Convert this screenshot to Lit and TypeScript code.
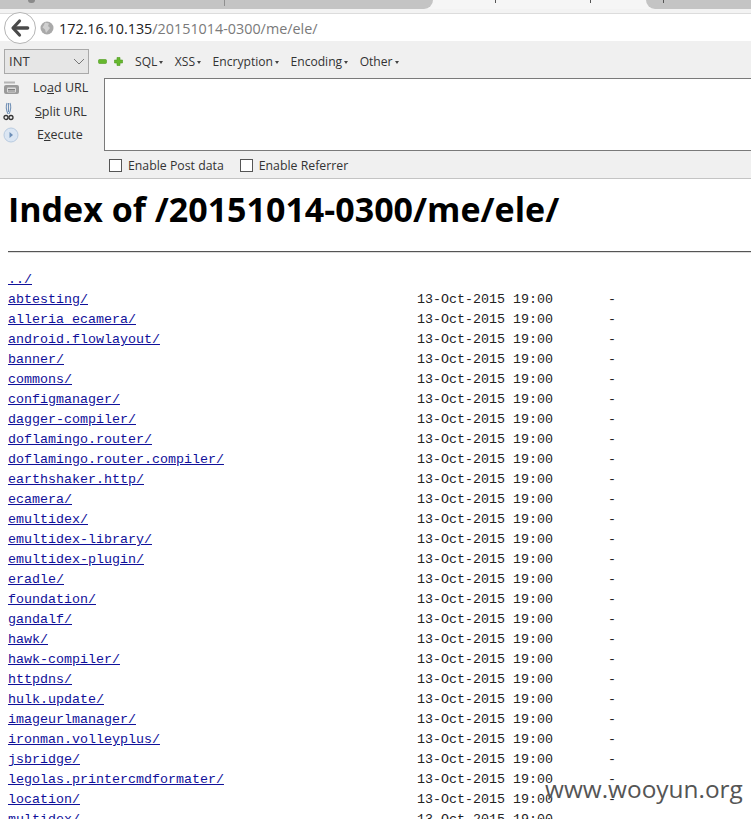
import { LitElement, html, css, svg } from "lit";
import { customElement } from "lit/decorators.js";

const names = [
  "abtesting/", "alleria_ecamera/", "android.flowlayout/", "banner/", "commons/",
  "configmanager/", "dagger-compiler/", "doflamingo.router/", "doflamingo.router.compiler/",
  "earthshaker.http/", "ecamera/", "emultidex/", "emultidex-library/", "emultidex-plugin/",
  "eradle/", "foundation/", "gandalf/", "hawk/", "hawk-compiler/", "httpdns/", "hulk.update/",
  "imageurlmanager/", "ironman.volleyplus/", "jsbridge/", "legolas.printercmdformater/",
  "location/", "multidex/",
];

const icons = {
  back: svg`<svg width="20" height="20" viewBox="0 0 20 20"><path d="M9.500 3 3 10 9.500 17" fill="none" stroke="#4a4a4a" stroke-width="3.200" stroke-linecap="round" stroke-linejoin="round"/><path d="M4 10H17.500" stroke="#4a4a4a" stroke-width="3.600" stroke-linecap="round"/></svg>`,
  globe: svg`<svg width="14" height="14" viewBox="0 0 14 14"><circle cx="7" cy="7" r="6.500" fill="#a9a9a9"/><path d="M5 1.500 9 2.500 8 5 10 7 8 9.500 6 12 5 8.500 2.500 6.500 4 4Z" fill="#d0d0d0"/></svg>`,
  minus: svg`<svg width="9" height="9" viewBox="0 0 9 9"><rect x="0.500" y="2.500" width="8" height="4" rx="1" fill="#66b82e" stroke="#4f9a1e" stroke-width=".6"/></svg>`,
  plus: svg`<svg width="9" height="9" viewBox="0 0 9 9"><path d="M3 .5H6V3H8.500V6H6V8.500H3V6H.5V3H3Z" fill="#66b82e" stroke="#4f9a1e" stroke-width=".6"/></svg>`,
  load: svg`<svg width="16" height="14" viewBox="0 0 16 14"><path d="M1 1.500H12" stroke="#b5b5b5" stroke-width="2"/><rect x="1" y="4" width="15" height="9" rx="2" fill="#9a9a9a"/><rect x="4" y="6.500" width="9" height="5" rx="1" fill="#dcdcdc"/><path d="M5 8.500H12M5 10H12" stroke="#666" stroke-width=".8"/></svg>`,
  split: svg`<svg width="11" height="19" viewBox="0 0 11 19"><path d="M4 1C2.500 5 3.500 9 5 12M7 1C8.500 5 7.500 9 6 12M5.500 1V10" fill="none" stroke="#6f8fb5" stroke-width="1.100"/><circle cx="3" cy="15.500" r="2" fill="none" stroke="#333" stroke-width="1.300"/><circle cx="8" cy="15.500" r="2" fill="none" stroke="#333" stroke-width="1.300"/></svg>`,
  run: svg`<svg width="16" height="16" viewBox="0 0 16 16"><circle cx="8" cy="8" r="7" fill="#dbe6f3" stroke="#b9cbe0"/><path d="M6.500 5 10 8 6.500 11Z" fill="#6d8fb8"/></svg>`,
  caret: svg`<svg width="12" height="7" viewBox="0 0 12 7"><path d="M1 1 6 6 11 1" fill="none" stroke="#777" stroke-width="1"/></svg>`,
};

@customElement("app-root")
export class AppRoot extends LitElement {
  static styles = css`
    :host {
      display: block;
      position: relative;
      height: 819px;
      overflow: hidden;
      background: #fff;
      font-family: "Open Sans", sans-serif;
    }
    .tabs {
      height: 9px;
      background: #f6f6f6;
      display: flex;
    }
    .tab {
      background: #c4c4c4;
      position: relative;
    }
    .tab-left {
      width: 433px;
      border-bottom-right-radius: 9px;
    }
    .tab-active {
      flex: 1;
      position: relative;
    }
    .tab-right {
      width: 105px;
      border-bottom-left-radius: 9px;
    }
    .mark {
      position: absolute;
      top: 0;
      width: 1px;
      height: 3px;
      background: #555;
    }
    .mark-tall {
      height: 6px;
      background: #8f8f8f;
    }
    .tab-star {
      position: absolute;
      left: 28px;
      top: 0;
      width: 7px;
      height: 3px;
      background: #8a8a8a;
      border-radius: 0 0 3px 3px;
    }
    .tab-gap {
      height: 5px;
      background: #f3f3f3;
      border-bottom: 1px solid #dcdcdc;
      box-sizing: border-box;
    }
    .nav {
      height: 27px;
      background: #fff;
      display: flex;
      align-items: center;
      padding-left: 40px;
      gap: 5px;
      position: relative;
      font-size: 14.350px;
      color: #222;
    }
    .addr { padding-top: 2px; }
    .back {
      position: absolute;
      left: 4px;
      top: -2px;
      width: 30px;
      height: 30px;
      border-radius: 50%;
      background: #fff;
      border: 1px solid #b5b5b5;
      display: flex;
      align-items: center;
      justify-content: center;
    }
    .path { color: #7a7a7a; }
    .hackbar {
      height: 137px;
      background: #f0f0f0;
      border-bottom: 1px solid #c4c4c4;
      font-size: 12.500px;
      color: #333;
    }
    .row1 {
      display: flex;
      align-items: center;
      height: 30px;
      padding: 5px 0 0 4px;
    }
    .select {
      box-sizing: border-box;
      width: 85px;
      height: 25px;
      border: 1px solid #a9a9a9;
      background: #e6e6e6;
      display: flex;
      align-items: center;
      justify-content: space-between;
      padding: 0 3px 0 4px;
      font-size: 13px;
    }
    .tools {
      display: flex;
      align-items: center;
      margin-left: 9px;
      font-size: 12.100px;
    }
    .tools svg { display: block; }
    .plus { margin-left: 7px; margin-right: 12px; }
    .menu { margin-right: 11.500px; white-space: nowrap; }
    .menu::after {
      content: "";
      display: inline-block;
      margin-left: 2px;
      vertical-align: 2px;
      border: 2px solid transparent;
      border-top: 3px solid #444;
      border-bottom: 0;
    }
    .row2 { display: flex; }
    .actions {
      width: 104px;
      flex: none;
      display: flex;
      flex-direction: column;
    }
    .action {
      height: 23.500px;
      display: flex;
      align-items: center;
    }
    .action svg { margin-left: 3px; }
    .ic { width: 26px; display: flex; flex: none; }
    .label-load { margin-left: 7px; }
    .label-split { margin-left: 9px; }
    .label-run { margin-left: 11px; }
    .textarea {
      flex: 1;
      height: 73px;
      margin-top: 2px;
      box-sizing: border-box;
      background: #fff;
      border: 1px solid #7a7a7a;
      border-right: 0;
    }
    .row3 {
      display: flex;
      align-items: center;
      height: 26px;
      padding: 1px 0 0 109px;
      font-size: 12.300px;
    }
    .check {
      display: flex;
      align-items: center;
      gap: 6px;
      margin-right: 16px;
    }
    .box {
      width: 11px;
      height: 11px;
      border: 1px solid #555;
      background: #fff;
    }
    h1 {
      margin: 0;
      padding: 8px 0 0 8px;
      font-size: 34px;
      line-height: 44px;
      font-weight: 700;
      color: #000;
      white-space: nowrap;
    }
    hr {
      margin: 20px 0 0 8px;
      border: 0;
      height: 1px;
      background: #555;
      box-shadow: 0 1px 0 #ddd;
    }
    .list {
      margin: 18px 0 0 8px;
      font-family: "Liberation Mono", monospace;
      font-size: 13.333px;
      line-height: 20px;
      color: #222;
      display: grid;
      grid-template-columns: 409px 191px auto;
      white-space: pre;
    }
    .list a { color: #10109a; text-decoration: underline; justify-self: start; }
    .watermark {
      position: absolute;
      left: 545px;
      top: 771px;
      font-size: 24.400px;
      line-height: 36px;
      color: #555;
      text-shadow: 0 0 1px rgba(255, 255, 255, 0.6);
      white-space: nowrap;
    }
  `;

  render() {
    return html`
      <div class="tabs">
        <div class="tab tab-left">
          <span class="tab-star"></span>
          <span class="mark mark-tall" style="left:224px"></span>
        </div>
        <div class="tab-active">
          <span class="mark" style="left:62px"></span>
          <span class="mark" style="left:157px"></span>
        </div>
        <div class="tab tab-right">
          <span class="mark" style="left:17px"></span>
        </div>
      </div>
      <div class="tab-gap"></div>
      <div class="nav">
        <span class="back">${icons.back}</span>
        ${icons.globe}
        <span class="addr">172.16.10.135<span class="path">/20151014-0300/me/ele/</span></span>
      </div>
      <div class="hackbar">
        <div class="row1">
          <div class="select"><span>INT</span>${icons.caret}</div>
          <div class="tools">
            ${icons.minus}<span class="plus">${icons.plus}</span>
            <span class="menu">SQL</span><span class="menu">XSS</span>
            <span class="menu">Encryption</span><span class="menu">Encoding</span>
            <span class="menu">Other</span>
          </div>
        </div>
        <div class="row2">
          <div class="actions">
            <div class="action"><span class="ic">${icons.load}</span><span class="label-load">Lo<u>a</u>d URL</span></div>
            <div class="action"><span class="ic">${icons.split}</span><span class="label-split"><u>S</u>plit URL</span></div>
            <div class="action"><span class="ic">${icons.run}</span><span class="label-run">E<u>x</u>ecute</span></div>
          </div>
          <div class="textarea"></div>
        </div>
        <div class="row3">
          <label class="check"><span class="box"></span>Enable Post data</label>
          <label class="check"><span class="box"></span>Enable Referrer</label>
        </div>
      </div>
      <h1>Index of /20151014-0300/me/ele/</h1>
      <hr />
      <div class="list">
        <a href="#">../</a><span></span><span></span>
        ${names.map(
          (n) => html`<a href="#">${n}</a><span>13-Oct-2015 19:00</span><span>-</span>`
        )}
      </div>
      <div class="watermark">www.wooyun.org</div>
    `;
  }
}
